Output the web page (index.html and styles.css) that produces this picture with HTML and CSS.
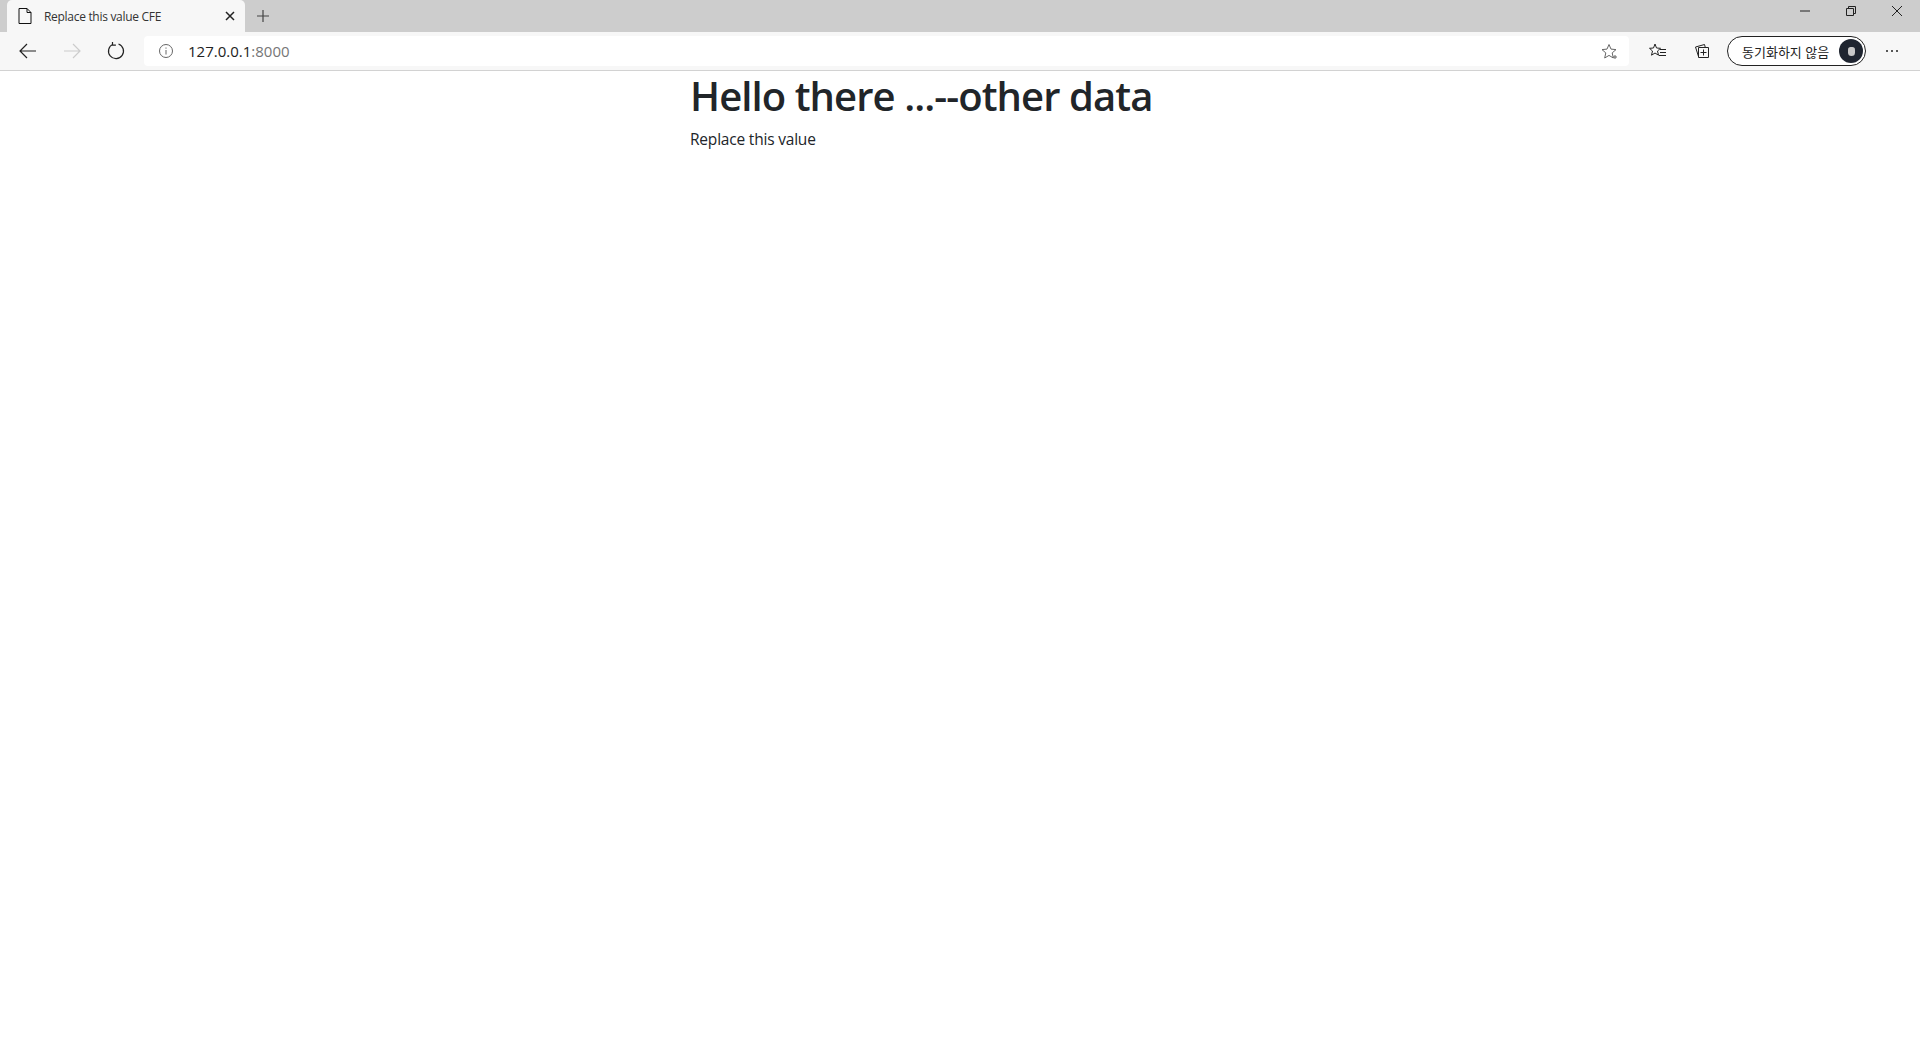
FILE: index.html
```html
<!DOCTYPE html>
<html lang="en">
<head>
  <meta charset="UTF-8">
  <meta name="viewport" content="width=device-width, initial-scale=1.0">
  <title>Replace this value CFE</title>
  <link rel="stylesheet" href="styles.css">
</head>
<body>
  <div class="browser">
    <div class="tabstrip">
      <div class="tab">
        <svg class="tab-icon" width="14" height="16" viewBox="0 0 14 16"><path d="M1 .5h8l4 4v11H1z M9 .5v4h4" fill="none" stroke="#111" stroke-width="1"/></svg>
        <span class="tab-title">Replace this value CFE</span>
        <svg class="tab-close" width="10" height="10" viewBox="0 0 10 10"><path d="M1 1l8 8M9 1l-8 8" stroke="#222" stroke-width="1.5"/></svg>
      </div>
      <svg class="new-tab" width="14" height="14" viewBox="0 0 14 14"><path d="M7 1v12M1 7h12" stroke="#444" stroke-width="1.200"/></svg>
      <div class="window-btns">
        <svg width="12" height="12" viewBox="0 0 12 12"><path d="M1 6h10" stroke="#222"/></svg>
        <svg width="12" height="12" viewBox="0 0 12 12"><path d="M1.500 3.500h7v7h-7z M3.500 3.500v-2h7v7h-2" fill="none" stroke="#222"/></svg>
        <svg width="12" height="12" viewBox="0 0 12 12"><path d="M1 1l10 10M11 1l-10 10" stroke="#222"/></svg>
      </div>
    </div>
    <div class="toolbar">
      <div class="nav-btns">
        <svg width="18" height="16" viewBox="0 0 18 16"><path d="M1 8h16M8 1L1 8l7 7" fill="none" stroke="#222" stroke-width="1.200"/></svg>
        <svg width="18" height="16" viewBox="0 0 18 16"><path d="M17 8H1M10 1l7 7-7 7" fill="none" stroke="#ccc" stroke-width="1.200"/></svg>
        <svg width="18" height="18" viewBox="0 0 18 18"><path d="M6 2.200A7.500 7.500 0 1 0 11.500 2M5.500 0v3.200h3.400" fill="none" stroke="#222" stroke-width="1.200"/></svg>
      </div>
      <div class="address">
        <svg class="info-icon" width="16" height="16" viewBox="0 0 16 16"><circle cx="8" cy="8" r="6.500" fill="none" stroke="#666"/><path d="M8 7v4.500M8 4.500v1.200" stroke="#666"/></svg>
        <span class="url">127.0.0.1<span class="port">:8000</span></span>
        <svg class="fav-icon" width="17" height="17" viewBox="0 0 17 17"><path d="M8 1.500l2 4.600 5 .5-3.800 3.300L12.300 15 8 12.400 3.700 15l1.100-5.100L1 6.600l5-.5z" fill="none" stroke="#666"/><path d="M14 12v4M12 14h4" stroke="#666"/></svg>
      </div>
      <div class="tools">
        <svg width="18" height="16" viewBox="0 0 18 16"><path d="M6 1l1.500 4 4 .3-3 2.700 1 4.200L6 10l-3.500 2.200 1-4.200-3-2.700 4-.3z" fill="#fff" stroke="#222"/><path d="M11 6.500h6M11 9.500h6M10 12.500h7" stroke="#222"/></svg>
        <svg width="16" height="16" viewBox="0 0 16 16"><path d="M4.500 13.500L1.500 4l9-2.500.8 3" fill="none" stroke="#222"/><path d="M4.500 4.500h10v10h-10z M9.500 6.500v6M6.500 9.500h6" fill="#f7f7f7" stroke="#222"/></svg>
        <div class="profile">
          <span class="profile-label">동기화하지 않음</span>
          <span class="avatar"><i class="avatar-face"></i></span>
        </div>
        <div class="more"><i></i><i></i><i></i></div>
      </div>
    </div>
  </div>
  <main class="container">
    <h1>Hello there ...--other data</h1>
    <p>Replace this value</p>
  </main>
</body>
</html>
```
FILE: styles.css
```css
* {
  box-sizing: border-box;
}

body {
  margin: 0;
  background: #fff;
  color: #212529;
  font-family: "Open Sans", "Noto Sans", "Noto Sans CJK KR", sans-serif;
}

.browser {
  border-bottom: 1px solid #d2d2d2;
}

.tabstrip {
  height: 32px;
  background: #cdcdcd;
  display: flex;
  align-items: center;
  padding-left: 7px;
}

.tab {
  width: 238px;
  height: 32px;
  background: #f7f7f7;
  border-radius: 5px 5px 0 0;
  display: flex;
  align-items: center;
  padding: 0 10px 0 11px;
}

.tab-icon {
  margin-right: 12px;
}

.tab-title {
  flex: 1;
  font-size: 12px;
  letter-spacing: -0.3px;
  color: #333;
}

.new-tab {
  margin-left: 11px;
}

.window-btns {
  margin-left: auto;
  display: flex;
  gap: 34px;
  padding: 0 17px 10px 0;
}

.toolbar {
  height: 38px;
  background: #f7f7f7;
  display: flex;
  align-items: center;
}

.nav-btns {
  width: 144px;
  display: flex;
  align-items: center;
  gap: 26px;
  padding-left: 19px;
}

.address {
  width: 1485px;
  height: 30px;
  background: #fff;
  border-radius: 4px;
  display: flex;
  align-items: center;
  padding: 0 11px 0 14px;
}

.info-icon {
  margin-right: 14px;
}

.url {
  flex: 1;
  font-size: 15px;
  color: #222;
}

.port {
  color: #767676;
}

.tools {
  flex: 1;
  display: flex;
  align-items: center;
  padding-left: 20px;
}

.tools svg {
  margin-right: 27px;
}

.tools svg + .profile {
  margin-left: -10px;
}

.profile {
  width: 139px;
  height: 30px;
  border: 1.5px solid #222;
  border-radius: 15px;
  display: flex;
  align-items: center;
  justify-content: space-between;
  padding: 0 2px 0 14px;
  background: #fff;
}

.profile-label {
  font-size: 13px;
  color: #222;
}

.avatar {
  width: 24px;
  height: 24px;
  border-radius: 50%;
  background: #1f2530;
  display: flex;
  align-items: center;
  justify-content: center;
}

.avatar-face {
  width: 7px;
  height: 9px;
  border-radius: 3px 3px 4px 4px;
  background: #c8c8c8;
}

.more {
  display: flex;
  gap: 3px;
  margin-left: 20px;
}

.more i {
  width: 2px;
  height: 2px;
  background: #222;
  border-radius: 50%;
}

.container {
  width: 540px;
  margin: 0 auto;
}

h1 {
  margin: 0 0 8px;
  padding-top: 1px;
  font-size: 40px;
  font-weight: 600;
  letter-spacing: -0.92px;
  line-height: 48px;
}

p {
  margin: -1px 0 0;
  font-size: 15.5px;
  letter-spacing: -0.2px;
  line-height: 24px;
}
```
